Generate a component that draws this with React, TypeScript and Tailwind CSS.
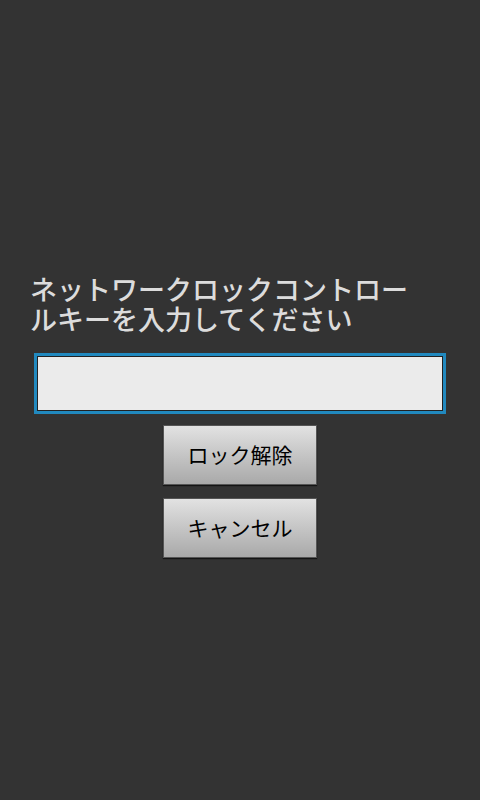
export default function App() {
  return (
    <div
      className="min-h-[800px] w-[480px] bg-[#333333] flex flex-col pt-[274px]"
      style={{ fontFamily: '"Noto Sans CJK JP", "Noto Sans", sans-serif' }}
    >
      <p className="mx-[30px] w-[392px] text-[27px] leading-[30px] font-medium text-[#dcdcdc]">
        ネットワークロックコントロールキーを入力してください
      </p>

      <div className="mt-[19px] mx-[34px] h-[61px] border-[3px] border-[#2189bf] bg-[#222] p-px">
        <input
          type="password"
          className="w-full h-full bg-[#ebebeb] outline-none px-2 text-[20px]"
        />
      </div>

      <div className="mt-[11px] flex flex-col items-center gap-[13px]">
        <button className="w-[154px] h-[60px] bg-gradient-to-b from-[#e2e2e2] to-[#a9a9a9] border border-[#555] text-black text-[21px] shadow-[0_1px_1px_rgba(0,0,0,0.6)]">
          ロック解除
        </button>
        <button className="w-[154px] h-[60px] bg-gradient-to-b from-[#e2e2e2] to-[#a9a9a9] border border-[#555] text-black text-[21px] shadow-[0_1px_1px_rgba(0,0,0,0.6)]">
          キャンセル
        </button>
      </div>
    </div>
  );
}
